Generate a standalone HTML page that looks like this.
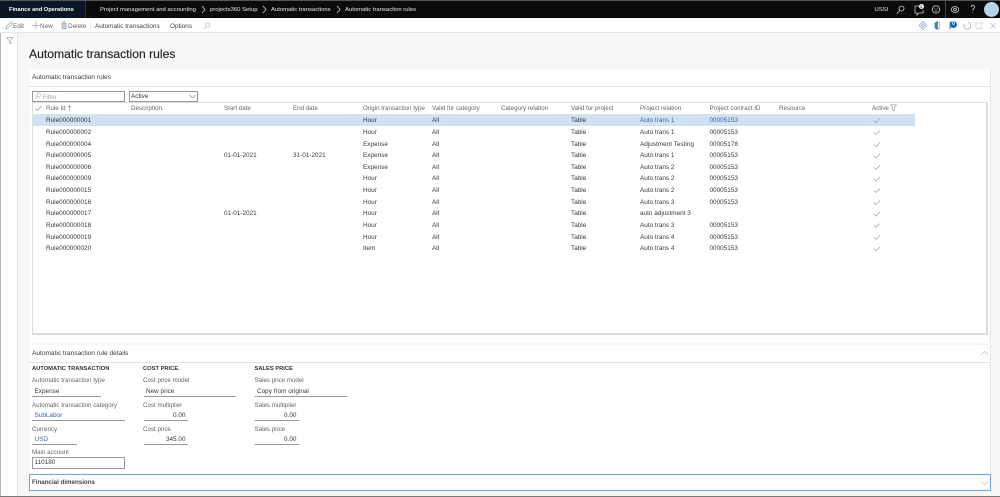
<!DOCTYPE html>
<html><head><meta charset="utf-8"><style>
html,body{margin:0;padding:0}
body{width:1000px;height:497px;position:relative;overflow:hidden;background:#f8f7f6;font-family:"Liberation Sans",sans-serif;font-size:6.4px;color:#3a3a3a;filter:blur(.25px)}
div,span.a,svg{position:absolute}
.t{white-space:nowrap;line-height:8px;height:8px;margin-top:.7px}
.h{color:#666;font-size:6.2px}
.l{color:#666;font-size:6.2px}
.b{color:#3b66b5}
.c{color:#e8e8e8;font-size:5.9px}
.u{height:1px;background:#999}
svg{overflow:visible;fill:none}
</style></head><body>
<div style="left:0;top:0;width:1000px;height:18px;background:#0b0b0b"></div>
<div style="left:0;top:0;width:1000px;height:1px;background:#555"></div>
<div style="left:0;top:1px;width:85px;height:17px;background:#0a1625"></div>
<div style="left:85px;top:1px;width:1px;height:17px;background:#333"></div>
<div class="t" style="left:9px;top:5.500px;color:#fff;font-weight:bold;font-size:5.700px">Finance and Operations</div>
<div class="t c" style="left:100px;top:5.500px">Project management and accounting</div>
<div class="t c" style="left:210px;top:5.500px">projects360 Setup</div>
<div class="t c" style="left:271px;top:5.500px">Automatic transactions</div>
<div class="t c" style="left:345px;top:5.500px">Automatic transaction rules</div>
<svg style="left:0;top:0" width="1000" height="33" stroke="#ccc" stroke-width=".8">
<path d="M202 6l3 3.500-3 3.500M263 6l3 3.500-3 3.500M337 6l3 3.500-3 3.500"/>
<circle cx="901.500" cy="8.500" r="2.500"/><path d="M899.500 10.500l-2.500 3"/>
<path d="M920 6h-5v7h2v2l2-2h4v-3"/>
<circle cx="936" cy="9.500" r="3.700"/><path d="M934.500 8.500h.8M936.700 8.500h.8M934.500 11h3"/>
<ellipse cx="955" cy="9.500" rx="3.800" ry="3"/><circle cx="955" cy="9.500" r="1.300"/>
<path d="M971 7c.3-2.500 3.500-2.500 3.500 0 0 1.500-1.700 1.700-1.700 3.500M972.800 12.500v.8"/>
</svg>
<div style="left:918.500px;top:4px;width:5px;height:5px;border-radius:50%;background:#fff;color:#000;font-size:4.500px;line-height:5px;text-align:center">1</div>
<div class="t c" style="left:874.500px;top:5.500px">USSI</div>
<div style="left:945px;top:1px;width:1px;height:17px;background:#444"></div>
<div style="left:984px;top:2px;width:15px;height:15px;border-radius:50%;background:#b6d3ee"></div>

<div style="left:0;top:18px;width:1000px;height:15px;background:#fff;border-bottom:1px solid #e8e6e4;box-sizing:border-box"></div>
<svg style="left:0;top:18px" width="1000" height="15" stroke="#8ba3c8" stroke-width=".7">
<path d="M6 11l1-3 4-4 1.500 1.500-4 4z"/>
<path d="M36 3.500v7.500M32 7.500h7.500"/>
<path d="M61.500 5h5M62 5v5.500h4V5M63 3.500h2" stroke="#8ba0bf" fill="#c6d1e2"/>
<path d="M90.500 4v7" stroke="#ddd"/>
<circle cx="207.500" cy="7" r="2.200" stroke="#a2b4d0"/><path d="M206 8.800l-2 2.200" stroke="#a2b4d0"/>
<path d="M923 3.500l4 4-4 4-4-4z" stroke="#7fa3d2"/><path d="M923 5.800l1.700 1.700-1.700 1.700-1.700-1.700z" stroke="#7fa3d2"/>
<path d="M935 5l2.500-1.500v8l-2.500-1.500z" fill="#3f7cbc" stroke="#3f7cbc"/><path d="M938 4.500h1.500v6H938" stroke="#7fa3d2"/>
<path d="M950 4h4v5h-3l-1.500 2z" fill="#6aa0d8" stroke="#6aa0d8"/>
<path d="M968 4.200a3.500 3.500 0 1 1-3.500 1.500" stroke="#7fa8d8"/>
<path d="M976 5h6v5.500h-6z" stroke="#cfcfcf"/><path d="M982.500 3.500v2" stroke="#cfcfcf"/>
<path d="M990.500 5l5 5.500M995.500 5l-5 5.500" stroke="#9dbbdd"/>
</svg>
<div style="left:950px;top:20.500px;width:7px;height:7px;background:#1565b8;border-radius:50%;color:#fff;font-size:5px;line-height:7px;text-align:center;font-weight:bold">0</div>
<div class="t" style="left:13px;top:22px;color:#666">Edit</div>
<div class="t" style="left:40px;top:22px;color:#666">New</div>
<div class="t" style="left:68px;top:22px;color:#666">Delete</div>
<div class="t" style="left:95px;top:22px;color:#444">Automatic transactions</div>
<div class="t" style="left:170px;top:22px;color:#444">Options</div>

<div style="left:0;top:33px;width:18px;height:464px;background:#fff;border-right:1px solid #e6e4e2;box-sizing:border-box"></div>
<div style="left:0;top:33px;width:1px;height:464px;background:#b5b5b5"></div>
<svg style="left:6px;top:37px" width="8" height="8" stroke="#9db0cc" stroke-width=".7"><path d="M.5 .5h6.500L4.700 3.500v3.500l-1.400-.8V3.500z"/></svg>

<div class="t" style="left:29px;top:45.500px;height:16px;line-height:16px;font-size:12.150px;color:#222;-webkit-text-stroke:.15px #222">Automatic transaction rules</div>

<div style="left:29px;top:69px;width:962px;height:274px;background:#fff;border-right:1px solid #e6e6e6;box-sizing:border-box"></div>
<div style="left:29px;top:86px;width:962px;height:1px;background:#e3e3e3"></div>
<div class="t" style="left:32px;top:73px;font-size:6.550px">Automatic transaction rules</div>
<div style="left:32px;top:102px;width:956px;height:233px;border:1px solid #dcdcdc;border-width:1px 2px 2px 1px;box-sizing:border-box"></div>
<div style="left:32px;top:91px;width:93px;height:11px;border:1px solid #999;box-sizing:border-box;background:#fff"></div>
<div style="left:129px;top:91px;width:69px;height:11px;border:1px solid #999;box-sizing:border-box;background:#fff"></div>
<svg style="left:34px;top:92px" width="8" height="8" stroke="#a2b4d0" stroke-width=".7"><circle cx="4.800" cy="3" r="2"/><path d="M3.300 4.500L1 7"/></svg>
<div class="t" style="left:42.500px;top:93px;color:#aaa">Filter</div>
<div class="t" style="left:131px;top:92.500px">Active</div>
<svg style="left:189px;top:94px" width="8" height="6" stroke="#888" stroke-width=".7"><path d="M.5 1l3 3 3-3"/></svg>

<div style="left:33px;top:114px;width:882px;height:12px;background:#cfe1f3"></div>
<div style="left:33px;top:113.500px;width:882px;height:1px;background:#dbe3ea"></div>
<svg style="left:35px;top:105px" width="8" height="7" stroke="#999" stroke-width=".7"><path d="M.5 3.500l2 2 4-4.500"/></svg>
<div class="t h" style="left:46px;top:104px">Rule Id</div>
<svg style="left:67px;top:104.500px" width="5" height="8" stroke="#888" stroke-width=".6"><path d="M2.500 .8v6M1 2.300l1.500-1.500L4 2.300"/></svg>
<div class="t h" style="left:131px;top:104px">Description.</div>
<div class="t h" style="left:224px;top:104px">Start date</div>
<div class="t h" style="left:293px;top:104px">End date</div>
<div class="t h" style="left:363px;top:104px">Origin transaction type</div>
<div class="t h" style="left:432px;top:104px">Valid for category</div>
<div class="t h" style="left:501px;top:104px">Category relation</div>
<div class="t h" style="left:571px;top:104px">Valid for project</div>
<div class="t h" style="left:640px;top:104px">Project relation</div>
<div class="t h" style="left:709.500px;top:104px">Project contract ID</div>
<div class="t h" style="left:779px;top:104px">Resource</div>
<div class="t h" style="left:872px;top:104px">Active</div>
<svg style="left:890px;top:104px" width="8" height="8" stroke="#999" stroke-width=".6"><path d="M.5 .8h6L4.300 3.500v3.500l-1.600-.8V3.500z"/></svg>

<div class="t" style="left:46px;top:116px">Rule000000001</div><div class="t" style="left:363px;top:116px">Hour</div><div class="t" style="left:432px;top:116px">All</div><div class="t" style="left:571px;top:116px">Table</div><div class="t b" style="left:640px;top:116px">Auto trans 1</div><div class="t b" style="left:709.500px;top:116px">00005153</div>
<div class="t" style="left:46px;top:128px">Rule000000002</div><div class="t" style="left:363px;top:128px">Hour</div><div class="t" style="left:432px;top:128px">All</div><div class="t" style="left:571px;top:128px">Table</div><div class="t" style="left:640px;top:128px">Auto trans 1</div><div class="t" style="left:709.500px;top:128px">00005153</div>
<div class="t" style="left:46px;top:140px">Rule000000004</div><div class="t" style="left:363px;top:140px">Expense</div><div class="t" style="left:432px;top:140px">All</div><div class="t" style="left:571px;top:140px">Table</div><div class="t" style="left:640px;top:140px">Adjustment Testing</div><div class="t" style="left:709.500px;top:140px">00005178</div>
<div class="t" style="left:46px;top:151.500px">Rule000000005</div><div class="t" style="left:224px;top:151.500px">01-01-2021</div><div class="t" style="left:293px;top:151.500px">31-01-2021</div><div class="t" style="left:363px;top:151.500px">Expense</div><div class="t" style="left:432px;top:151.500px">All</div><div class="t" style="left:571px;top:151.500px">Table</div><div class="t" style="left:640px;top:151.500px">Auto trans 1</div><div class="t" style="left:709.500px;top:151.500px">00005153</div>
<div class="t" style="left:46px;top:163px">Rule000000006</div><div class="t" style="left:363px;top:163px">Expense</div><div class="t" style="left:432px;top:163px">All</div><div class="t" style="left:571px;top:163px">Table</div><div class="t" style="left:640px;top:163px">Auto trans 2</div><div class="t" style="left:709.500px;top:163px">00005153</div>
<div class="t" style="left:46px;top:174.500px">Rule000000009</div><div class="t" style="left:363px;top:174.500px">Hour</div><div class="t" style="left:432px;top:174.500px">All</div><div class="t" style="left:571px;top:174.500px">Table</div><div class="t" style="left:640px;top:174.500px">Auto trans 2</div><div class="t" style="left:709.500px;top:174.500px">00005153</div>
<div class="t" style="left:46px;top:186px">Rule000000015</div><div class="t" style="left:363px;top:186px">Hour</div><div class="t" style="left:432px;top:186px">All</div><div class="t" style="left:571px;top:186px">Table</div><div class="t" style="left:640px;top:186px">Auto trans 2</div><div class="t" style="left:709.500px;top:186px">00005153</div>
<div class="t" style="left:46px;top:198px">Rule000000016</div><div class="t" style="left:363px;top:198px">Hour</div><div class="t" style="left:432px;top:198px">All</div><div class="t" style="left:571px;top:198px">Table</div><div class="t" style="left:640px;top:198px">Auto trans 3</div><div class="t" style="left:709.500px;top:198px">00005153</div>
<div class="t" style="left:46px;top:209.500px">Rule000000017</div><div class="t" style="left:224px;top:209.500px">01-01-2021</div><div class="t" style="left:363px;top:209.500px">Hour</div><div class="t" style="left:432px;top:209.500px">All</div><div class="t" style="left:571px;top:209.500px">Table</div><div class="t" style="left:640px;top:209.500px">auto adjustment 3</div>
<div class="t" style="left:46px;top:221px">Rule000000018</div><div class="t" style="left:363px;top:221px">Hour</div><div class="t" style="left:432px;top:221px">All</div><div class="t" style="left:571px;top:221px">Table</div><div class="t" style="left:640px;top:221px">Auto trans 3</div><div class="t" style="left:709.500px;top:221px">00005153</div>
<div class="t" style="left:46px;top:233px">Rule000000019</div><div class="t" style="left:363px;top:233px">Hour</div><div class="t" style="left:432px;top:233px">All</div><div class="t" style="left:571px;top:233px">Table</div><div class="t" style="left:640px;top:233px">Auto trans 4</div><div class="t" style="left:709.500px;top:233px">00005153</div>
<div class="t" style="left:46px;top:244.500px">Rule000000020</div><div class="t" style="left:363px;top:244.500px">Item</div><div class="t" style="left:432px;top:244.500px">All</div><div class="t" style="left:571px;top:244.500px">Table</div><div class="t" style="left:640px;top:244.500px">Auto trans 4</div><div class="t" style="left:709.500px;top:244.500px">00005153</div>

<svg style="left:873px;top:114px" width="9" height="140" stroke="#999" stroke-width=".6">
<path d="M1 6.500l2 2 4-4M1 18.500l2 2 4-4M1 30.500l2 2 4-4M1 42l2 2 4-4M1 53.500l2 2 4-4M1 65l2 2 4-4M1 76.500l2 2 4-4M1 88.500l2 2 4-4M1 100l2 2 4-4M1 111.500l2 2 4-4M1 123.500l2 2 4-4M1 135l2 2 4-4"/>
</svg>

<div style="left:29px;top:345px;width:962px;height:128px;background:#fff;border-right:1px solid #e6e6e6;box-sizing:border-box"></div>
<div style="left:29px;top:362px;width:962px;height:1px;background:#e3e3e3"></div>
<div class="t" style="left:32px;top:349.500px;font-size:6.550px">Automatic transaction rule details</div>
<svg style="left:980px;top:350px" width="9" height="6" stroke="#bbb" stroke-width=".7"><path d="M1 4.500l3.500-3 3.500 3"/></svg>

<div class="t" style="left:32px;top:364.500px;font-weight:bold;font-size:5.750px;color:#333">AUTOMATIC TRANSACTION</div>
<div class="t" style="left:143px;top:364.500px;font-weight:bold;font-size:5.750px;color:#333">COST PRICE.</div>
<div class="t" style="left:254.500px;top:364.500px;font-weight:bold;font-size:5.750px;color:#333">SALES PRICE</div>

<div class="t l" style="left:32px;top:376px">Automatic transaction type</div>
<div class="t" style="left:34.500px;top:387px">Expense</div>
<div class="u" style="left:32px;top:396px;width:69px"></div>
<div class="t l" style="left:32px;top:401px">Automatic transaction category</div>
<div class="t b" style="left:34.500px;top:411px">SubLabor</div>
<div class="u" style="left:32px;top:420px;width:93px"></div>
<div class="t l" style="left:32px;top:425px">Currency</div>
<div class="t b" style="left:34.500px;top:435px">USD</div>
<div class="u" style="left:32px;top:444px;width:45px"></div>
<div class="t l" style="left:32px;top:448.500px">Main account</div>
<div style="left:32px;top:457px;width:93px;height:12px;border:1px solid #999;box-sizing:border-box;background:#fff"></div>
<div class="t" style="left:34.500px;top:458.500px">110180</div>

<div class="t l" style="left:143px;top:376px">Cost price model</div>
<div class="t" style="left:146px;top:387px">New price</div>
<div class="u" style="left:144px;top:396px;width:92px"></div>
<div class="t l" style="left:143px;top:401px">Cost multiplier</div>
<div class="t" style="left:144px;top:411px;width:41.500px;text-align:right">0.00</div>
<div class="u" style="left:144px;top:420px;width:44px"></div>
<div class="t l" style="left:143px;top:425px">Cost price</div>
<div class="t" style="left:144px;top:435px;width:41.500px;text-align:right">345.00</div>
<div class="u" style="left:144px;top:444px;width:44px"></div>

<div class="t l" style="left:254.500px;top:376px">Sales price model</div>
<div class="t" style="left:257px;top:387px">Copy from original</div>
<div class="u" style="left:255px;top:396px;width:92px"></div>
<div class="t l" style="left:254.500px;top:401px">Sales multiplier</div>
<div class="t" style="left:255px;top:411px;width:41.500px;text-align:right">0.00</div>
<div class="u" style="left:255px;top:420px;width:44px"></div>
<div class="t l" style="left:254.500px;top:425px">Sales price</div>
<div class="t" style="left:255px;top:435px;width:41.500px;text-align:right">0.00</div>
<div class="u" style="left:255px;top:444px;width:44px"></div>

<div style="left:29px;top:474px;width:962px;height:17px;background:#fff;border:1px solid #6fa3dc;box-sizing:border-box"></div>
<div class="t" style="left:32px;top:478px;font-weight:bold;font-size:6.200px;color:#444">Financial dimensions</div>
<svg style="left:980px;top:480px" width="9" height="6" stroke="#bbb" stroke-width=".7"><path d="M1 1.500l3.500 3 3.500-3"/></svg>
<div style="left:0;top:496px;width:1000px;height:1px;background:#777"></div>
</body></html>
